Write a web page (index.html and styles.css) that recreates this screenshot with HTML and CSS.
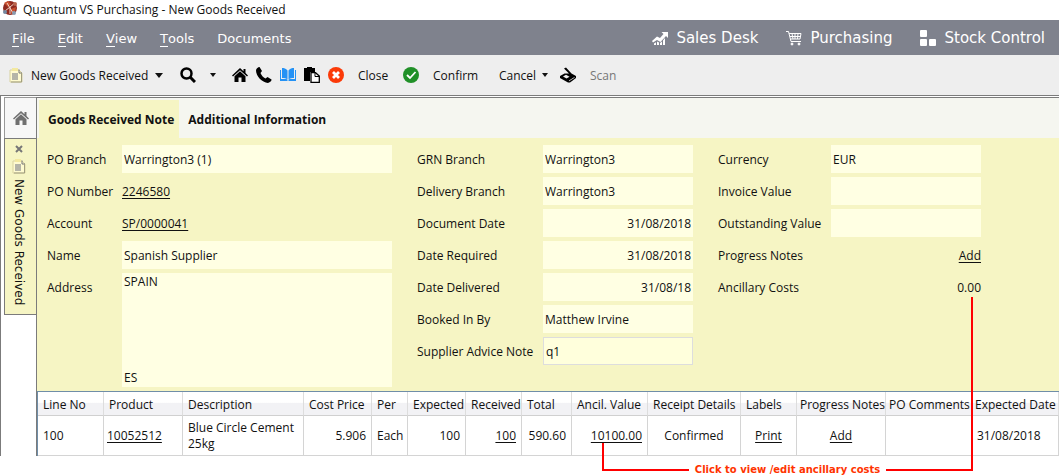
FILE: index.html
```html
<!DOCTYPE html>
<html lang="en">
<head>
<meta charset="utf-8">
<title>Quantum VS Purchasing - New Goods Received</title>
<link rel="stylesheet" href="styles.css">
</head>
<body>
<svg class="defs" aria-hidden="true">
  <symbol id="doc" viewBox="0 0 16 16">
    <path d="M2 3h9l3 3v9H2z" fill="#fffbd0" stroke="#d9d3a0"/>
    <path d="M4 1h6v3H4z" fill="#f3e9a0"/><path d="M11 2.500v3.500h3" fill="none" stroke="#777"/>
    <path d="M4 6h6v7H4z" fill="#b5b5a8"/><path d="M13.500 6v9H3" fill="none" stroke="#a09d80"/>
  </symbol>
  <symbol id="home" viewBox="0 0 16 16">
    <path d="M8 1 0 8.400l1 1.100L8 3.200l7 6.300 1-1.100-2.500-2.300V2h-2v2.200z"/><path d="M8 4.300 2.500 9.200V15h4v-4.500h3V15h4V9.200z"/>
  </symbol>
</svg>
<header class="titlebar">
  <svg class="logo" viewBox="0 0 16 16"><circle cx="8" cy="8" r="7" fill="#8f2a20"/><path d="M2 3 6 1l3 3-3 3zM9 9l5-2-1 5-4 2z" fill="#c9502f"/><path d="M3 11 8 7l5-4M5 3l6 10M8 7v7" stroke="#f0d2c4" fill="none"/><circle cx="3" cy="12" r="2" fill="#7488a0"/><circle cx="13" cy="4" r="2" fill="#b9644c"/><circle cx="12" cy="13" r="2" fill="#8a9bb0"/></svg>
  <span>Quantum VS Purchasing - New Goods Received</span>
</header>
<nav class="menubar">
  <div class="menus">
    <button><u>F</u>ile</button><button><u>E</u>dit</button><button><u>V</u>iew</button><button><u>T</u>ools</button><button>Documents</button>
  </div>
  <div class="areas">
    <button><svg viewBox="0 0 16 16" fill="#fff"><path d="M0 11 5 6.500l3 1.500 3.500-4-2-2H16v6l-2-2-5.500 6L5 10 1 12.500zM2 13.500l2-1.200V15H2zM5 11.500l2 1V15H5zM8 13l2-1.500V15H8zM11 10.500 13 8v7h-2z"/></svg>Sales Desk</button>
    <button><svg viewBox="0 0 16 16" fill="none" stroke="#fff"><path d="M0 1.500h2.500L5 11.500h10M3.200 3.500H15L14 9H4.500M4 6.500h10.500M6 3.500 7 9M9 3.500V9M12 3.500 11.500 9"/><circle cx="6" cy="14" r="1" fill="#fff"/><circle cx="13" cy="14" r="1" fill="#fff"/></svg>Purchasing</button>
    <button><svg viewBox="0 0 16 16" fill="#fff"><rect width="7" height="7" rx="1"/><rect y="9" width="7" height="7" rx="1"/><rect x="9" y="9" width="7" height="7" rx="1"/></svg>Stock Control</button>
  </div>
</nav>
<div class="toolbar">
  <button class="tool new"><svg><use href="#doc"/></svg><span>New Goods Received</span><i class="caret"></i></button>
  <button class="tool search" aria-label="Search"><svg viewBox="0 0 16 16" fill="none" stroke="#000"><circle cx="6.500" cy="6.500" r="5" stroke-width="2.500"/><path d="m10 10 5 5" stroke-width="3"/></svg><i class="caret small"></i></button>
  <div class="quick">
    <button class="tool" aria-label="Home"><svg><use href="#home"/></svg></button>
    <button class="tool" aria-label="Phone"><svg viewBox="0 0 16 16"><path d="M3.500 0 6 4 4.500 6c.7 2 2.800 4.500 5 5.500L11.500 10l4 2.500c.5.600-.8 3-3.500 3.500C6 15.500 0 9 0 3.500 0 1.500 2.500-.3 3.500 0z"/></svg></button>
    <button class="tool" aria-label="Catalogue"><svg viewBox="0 0 16 16" fill="#2492f5"><path d="M0 3h1v9h5.500l1 1v1H0zM16 3h-1v9H9.500l-1 1v1H16zM2 1c2 0 4 .5 5.500 2.500v9C6 11 4 11 2 11zM14 1c-2 0-4 .5-5.500 2.500v9C10 11 12 11 14 11z"/></svg></button>
    <button class="tool" aria-label="Paste"><svg viewBox="0 0 16 16"><path d="M0 1h3V0h5v1h3v4H6v9H0z"/><path d="M7 5.700h4.500L15.300 9v6.300H7z" fill="#fff" stroke="#000" stroke-width="1.300"/><path d="M11 5.500V9.500h4.500" fill="none" stroke="#000"/></svg></button>
  </div>
  <button class="tool close"><svg viewBox="0 0 16 16"><circle cx="8" cy="8" r="8" fill="#fb3a08"/><path d="m5 5 6 6m0-6-6 6" stroke="#fff" stroke-width="2.800"/></svg><span>Close</span></button>
  <button class="tool confirm"><svg viewBox="0 0 16 16"><circle cx="8" cy="8" r="8" fill="#209028"/><path d="m4 8 3 3 5.500-6" fill="none" stroke="#fff" stroke-width="1.800"/></svg><span>Confirm</span></button>
  <button class="tool cancel"><span>Cancel</span><i class="caret small"></i></button>
  <button class="tool scan" disabled><svg viewBox="0 0 16 16"><path d="M4 1.500 6 .5l5.500 6L16 9v2l-6 4.500H8L0 11V9l4.500-2.500H9z"/><path d="m3 9.500 3-1.700 3.500 2L6.500 11.500zM9 13.500l5.500-3.500v.8L9 14.300z" fill="#eee"/></svg><span>Scan</span></button>
</div>
<div class="workspace">
  <aside class="rail">
    <button class="rail-home" aria-label="Home"><svg><use href="#home"/></svg></button>
    <div class="rail-tab">
      <button class="rail-close" aria-label="Close tab"><svg viewBox="0 0 8 8"><path d="m1 1 6 6m0-6L1 7" stroke="#777" stroke-width="2"/></svg></button>
      <svg class="rail-doc"><use href="#doc"/></svg>
      <span>New Goods Received</span>
    </div>
  </aside>
  <main class="panel">
    <div class="tabs" role="tablist">
      <button role="tab" aria-selected="true" class="tab active">Goods Received Note</button><button role="tab" aria-selected="false" class="tab">Additional Information</button>
    </div>
    <form class="form">
      <div class="fields first">
        <label for="po">PO Branch</label><input id="po" value="Warrington3 (1)" readonly>
        <span>PO Number</span><a href="#">2246580</a>
        <span>Account</span><a href="#">SP/0000041</a>
        <label for="name">Name</label><input id="name" value="Spanish Supplier" readonly>
        <label for="address">Address</label><textarea id="address" readonly>SPAIN





ES</textarea>
      </div>
      <div class="fields second">
        <label for="grn">GRN Branch</label><input id="grn" value="Warrington3" readonly>
        <label for="del">Delivery Branch</label><input id="del" value="Warrington3" readonly>
        <label for="dd">Document Date</label><input id="dd" class="right" value="31/08/2018" readonly>
        <label for="dr">Date Required</label><input id="dr" class="right" value="31/08/2018" readonly>
        <label for="dv">Date Delivered</label><input id="dv" class="right" value="31/08/18" readonly>
        <label for="by">Booked In By</label><input id="by" value="Matthew Irvine" readonly>
        <label for="note">Supplier Advice Note</label><input id="note" class="editable" value="q1">
      </div>
      <div class="fields third">
        <label for="cur">Currency</label><input id="cur" value="EUR" readonly>
        <label for="inv">Invoice Value</label><input id="inv" readonly>
        <label for="out">Outstanding Value</label><input id="out" readonly>
        <span>Progress Notes</span><a class="end" href="#">Add</a>
        <span>Ancillary Costs</span><span class="end">0.00</span>
      </div>
    </form>
    <table class="lines">
      <colgroup><col class="w66"><col class="w79"><col class="w121"><col class="w68"><col class="w36"><col class="w58"><col class="w56"><col class="w50"><col class="w76"><col class="w93"><col class="w56"><col class="w89"><col class="w86"><col class="w87"></colgroup>
      <thead><tr><th>Line No</th><th>Product</th><th>Description</th><th>Cost Price</th><th>Per</th><th>Expected</th><th>Received</th><th>Total</th><th>Ancil. Value</th><th>Receipt Details</th><th>Labels</th><th class="tight">Progress Notes</th><th class="tight">PO Comments</th><th class="tight">Expected Date</th></tr></thead>
      <tbody><tr><td>100</td><td class="link"><a href="#">10052512</a></td><td>Blue Circle Cement 25kg</td><td class="right">5.906</td><td>Each</td><td class="right">100</td><td class="right"><a href="#">100</a></td><td class="right">590.60</td><td class="right"><a href="#">10100.00</a></td><td class="center">Confirmed</td><td class="center"><a href="#">Print</a></td><td class="center"><a href="#">Add</a></td><td></td><td>31/08/2018</td></tr></tbody>
    </table>
  </main>
</div>
<div class="callout">
  <i class="line-cost"></i><i class="line-value"></i>
  <span>Click to view /edit ancillary costs</span>
</div>
</body>
</html>
```
FILE: styles.css
```css
* { box-sizing: border-box; }
body { margin: 0; background: #fff; color: #111; font: 12px/16px "Open Sans", "Noto Sans", sans-serif; position: relative; }
button, input, textarea { font: inherit; color: inherit; margin: 0; padding: 0; border: 0; background: none; border-radius: 0; }
button { display: flex; align-items: center; white-space: nowrap; }
a { color: inherit; text-underline-offset: 2px; }
svg { width: 16px; height: 16px; flex: none; display: block; }
.defs { position: absolute; width: 0; height: 0; }

.titlebar { display: flex; align-items: center; gap: 5px; height: 20px; padding: 0 2px; }
.logo { margin-bottom: 4px; }

.menubar { display: flex; justify-content: space-between; height: 35px; padding: 0 14px 0 12px; background: #7f828d; color: #fff; font-family: "DejaVu Sans", sans-serif; }
.menus, .areas { display: flex; align-items: center; }
.menus { gap: 23px; padding-top: 2px; font-size: 13px; }
.menus button { align-items: baseline; }
.menus u { text-decoration: none; line-height: 14px; border-bottom: 1px solid #fff; }
.areas { gap: 28px; font-size: 15px; }
.areas button { gap: 8px; }

.toolbar { display: flex; align-items: center; height: 40px; padding: 0 8px; background: #eee; }
.toolbar span { padding-top: 2px; }
.new { gap: 7px; width: 172px; }
.caret { border: 4px solid transparent; border-top: 5px solid #111; border-bottom: 0; }
.caret.small { border-width: 4px 3px 0; }
.search { gap: 14px; width: 52px; }
.quick { display: flex; gap: 8px; width: 96px; }
.close { gap: 14px; width: 75px; }
.confirm { gap: 14px; width: 96px; }
.cancel { gap: 6px; width: 61px; }
.scan { gap: 14px; color: #777; }

.workspace { display: flex; border-top: 1px solid #7b7b7b; border-left: 1px solid #7b7b7b; padding: 1px 0 0 3px; }
.rail { width: 32px; flex: none; }
.rail-home { width: 32px; height: 41px; justify-content: center; background: #f7f7f7; border: 1px solid #999; border-width: 1px 0 0 1px; fill: #707070; }
.rail-tab { display: flex; flex-direction: column; align-items: center; gap: 5px; padding: 6px 4px 9px 0; background: #f6f5c4; border: 1px solid #7b7b7b; border-right: 0; }
.rail-close svg { width: 8px; height: 8px; }
.rail-tab span { writing-mode: vertical-rl; font: 12px/16px "DejaVu Sans", sans-serif; }

.panel { flex: 1; min-width: 0; border: 1px solid #7b7b7b; border-width: 1px 0 0 1px; }
.tabs { display: flex; padding: 2px 2px 0; background: #f5f6f0; }
.tab { height: 38px; padding: 2px 5px 0 9px; font-weight: 700; }
.active { background: #f6f5c4; }

.form { display: flex; gap: 25px; padding: 7px 10px 4px; background: #f6f5c4; }
.fields { display: grid; grid-auto-rows: minmax(28px, auto); gap: 4px 0; align-content: start; line-height: 28px; }
.first { grid-template-columns: 75px 270px; }
.second { grid-template-columns: 126px 150px; }
.third { grid-template-columns: 113px 150px; }
.fields > * { height: 28px; padding-top: 1px; white-space: nowrap; }
.fields input, .fields textarea { width: 100%; padding: 2px 2px 0; background: #ffffe3; outline: 0; }
.fields input.editable { border: 1px solid #ddd; background: #ffffdc; }
.fields textarea { display: block; height: 114px; padding-top: 1px; line-height: 16px; resize: none; overflow: hidden; }
.fields .end { text-align: right; }
.right { text-align: right; }
.center { text-align: center; }

.lines { width: 100%; table-layout: fixed; border-collapse: separate; border-spacing: 0; border-top: 1px solid #6f8ea8; border-left: 1px solid #6f8ea8; background: #fff; }
.lines th { height: 24px; padding: 2px 0 0 5px; font-weight: 400; text-align: left; white-space: nowrap; background: linear-gradient(#fff 45%, #f2f2f5 50%); border-right: 1px solid #ddd; border-bottom: 1px solid #d0d0d0; }
.lines th.tight { padding-left: 3px; }
.lines td { height: 40px; padding: 0 5px; border-right: 1px solid #d4d4d4; border-bottom: 1px solid #d4d4d4; }
.lines td.link { padding-left: 3px; }
.w36 { width: 36px; } .w50 { width: 50px; } .w56 { width: 56px; } .w58 { width: 58px; }
.w66 { width: 66px; } .w68 { width: 68px; } .w76 { width: 76px; } .w79 { width: 79px; }
.w86 { width: 86px; } .w87 { width: 87px; } .w89 { width: 89px; } .w93 { width: 93px; } .w121 { width: 121px; }

.callout { display: flex; align-items: center; gap: 6px; padding: 6px 86px 0 602px; color: #ff3300; font: bold 10px/16px "DejaVu Sans", sans-serif; white-space: nowrap; }
.callout::after { content: ""; flex: 1; height: 2px; background: #f00; order: 3; }
.callout::before { content: ""; flex: 1; height: 2px; background: #f00; }
.line-cost, .line-value { position: absolute; width: 2px; background: #f00; }
.line-cost { top: 297px; right: 86px; bottom: 7px; }
.line-value { top: 443px; left: 602px; bottom: 7px; }
```
